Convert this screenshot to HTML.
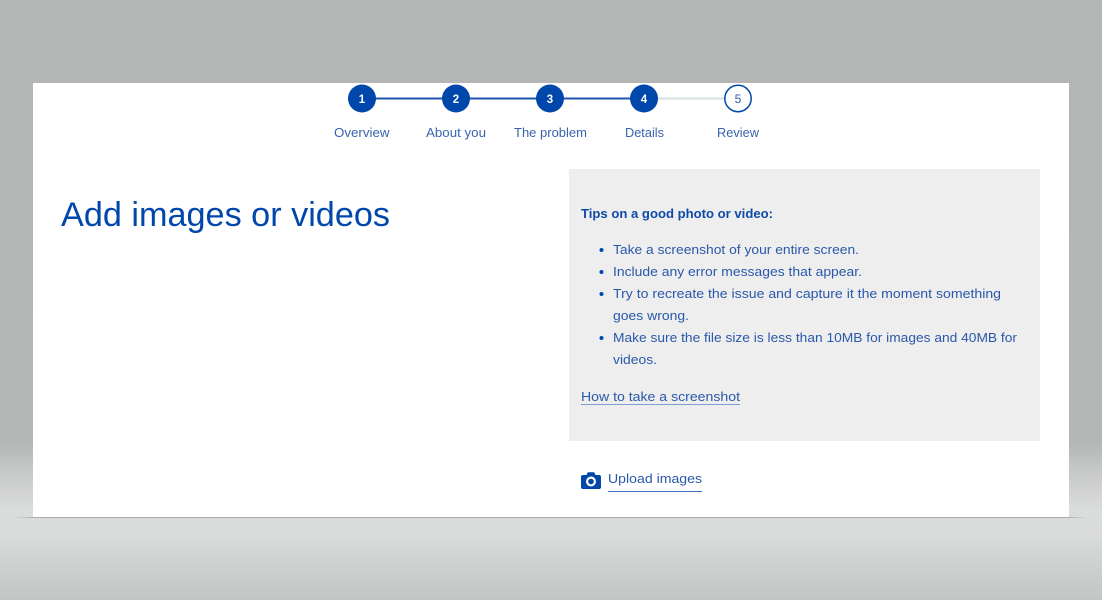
<!DOCTYPE html>
<html lang="en">
<head>
<meta charset="utf-8">
<title>Add images or videos</title>
<style>
html,body{margin:0;padding:0;width:1102px;height:600px;overflow:hidden;background:#b4b6b5}
svg{display:block;position:absolute;left:0;top:0}
text{font-family:"Liberation Sans",sans-serif}
.s{font-size:12.500px;fill:#3a64ae}
.l{font-size:13px;fill:#2a58aa}
.n{font-size:11.500px;font-weight:bold;fill:#fff;text-anchor:middle}
</style>
</head>
<body>
<svg width="1102" height="600" viewBox="0 0 1102 600" xmlns="http://www.w3.org/2000/svg">
<defs>
<linearGradient id="bg" x1="0" y1="0" x2="0" y2="1">
<stop offset="0" stop-color="#b4b6b5"/>
<stop offset="0.74" stop-color="#b5b7b6"/>
<stop offset="0.79" stop-color="#c8cac9"/>
<stop offset="0.85" stop-color="#dbdcdc"/>
<stop offset="0.89" stop-color="#dadbdb"/>
<stop offset="1" stop-color="#c3c5c5"/>
</linearGradient>
<linearGradient id="ln" x1="0" y1="0" x2="1" y2="0">
<stop offset="0" stop-color="#a9abab" stop-opacity="0"/>
<stop offset="0.02" stop-color="#a9abab"/>
<stop offset="0.98" stop-color="#a9abab"/>
<stop offset="1" stop-color="#a9abab" stop-opacity="0"/>
</linearGradient>
</defs>
<rect width="1102" height="600" fill="url(#bg)"/>
<rect x="14" y="517" width="1074" height="1" fill="url(#ln)"/>
<rect x="33" y="83" width="1036" height="434" fill="#fff"/>

<!-- stepper -->
<rect x="362" y="97.500" width="282" height="2" fill="#1f55ad"/>
<rect x="644" y="97.500" width="94" height="2" fill="#d5e0e0"/>
<circle cx="362" cy="98.500" r="14" fill="#0047ab"/>
<circle cx="456" cy="98.500" r="14" fill="#0047ab"/>
<circle cx="550" cy="98.500" r="14" fill="#0047ab"/>
<circle cx="644" cy="98.500" r="14" fill="#0047ab"/>
<circle cx="738" cy="98.500" r="13.200" fill="#fff" stroke="#0047ab" stroke-width="1.500"/>
<text class="n" x="362" y="103">1</text>
<text class="n" x="456" y="103">2</text>
<text class="n" x="550" y="103">3</text>
<text class="n" x="644" y="103">4</text>
<text x="738" y="103" text-anchor="middle" style="font-size:12px;fill:#2d5aa8">5</text>

<text class="s" x="334" y="137" textLength="55.500" lengthAdjust="spacingAndGlyphs">Overview</text>
<text class="s" x="426" y="137" textLength="60" lengthAdjust="spacingAndGlyphs">About you</text>
<text class="s" x="514" y="137" textLength="73" lengthAdjust="spacingAndGlyphs">The problem</text>
<text class="s" x="625" y="137" textLength="39" lengthAdjust="spacingAndGlyphs">Details</text>
<text class="s" x="717" y="137" textLength="42" lengthAdjust="spacingAndGlyphs">Review</text>

<!-- heading -->
<text x="61" y="226" textLength="329" lengthAdjust="spacingAndGlyphs" style="font-size:34px;fill:#0047ab">Add images or videos</text>

<!-- panel -->
<rect x="569" y="169" width="471" height="272" fill="#eeeeee"/>
<text x="581" y="218" textLength="192" lengthAdjust="spacingAndGlyphs" style="font-size:13px;font-weight:bold;fill:#0f4aa8">Tips on a good photo or video:</text>

<circle cx="601.500" cy="250" r="2" fill="#0047ab"/>
<circle cx="601.500" cy="272" r="2" fill="#0047ab"/>
<circle cx="601.500" cy="294" r="2" fill="#0047ab"/>
<circle cx="601.500" cy="338" r="2" fill="#0047ab"/>

<text class="l" x="613" y="254" textLength="246" lengthAdjust="spacingAndGlyphs">Take a screenshot of your entire screen.</text>
<text class="l" x="613" y="276" textLength="249" lengthAdjust="spacingAndGlyphs">Include any error messages that appear.</text>
<text class="l" x="613" y="298" textLength="388" lengthAdjust="spacingAndGlyphs">Try to recreate the issue and capture it the moment something</text>
<text class="l" x="613" y="320" textLength="76" lengthAdjust="spacingAndGlyphs">goes wrong.</text>
<text class="l" x="613" y="342" textLength="404" lengthAdjust="spacingAndGlyphs">Make sure the file size is less than 10MB for images and 40MB for</text>
<text class="l" x="613" y="364" textLength="44" lengthAdjust="spacingAndGlyphs">videos.</text>

<text class="l" x="581" y="401" textLength="159" lengthAdjust="spacingAndGlyphs">How to take a screenshot</text>
<rect x="581" y="404" width="159" height="1" fill="#7f9fd2"/>

<!-- upload -->
<path d="M583 475h3.500l1.300-2.700h6.400l1.300 2.700h3.500a2 2 0 0 1 2 2v10a2 2 0 0 1-2 2h-16a2 2 0 0 1-2-2v-10a2 2 0 0 1 2-2z" fill="#0047ab"/>
<circle cx="591" cy="481.500" r="5" fill="#fff"/>
<circle cx="591" cy="481.500" r="2.800" fill="#0047ab"/>
<text class="l" x="608" y="483" textLength="94" lengthAdjust="spacingAndGlyphs">Upload images</text>
<rect x="608" y="491" width="94" height="1" fill="#3f70bd"/>
</svg>
</body>
</html>
